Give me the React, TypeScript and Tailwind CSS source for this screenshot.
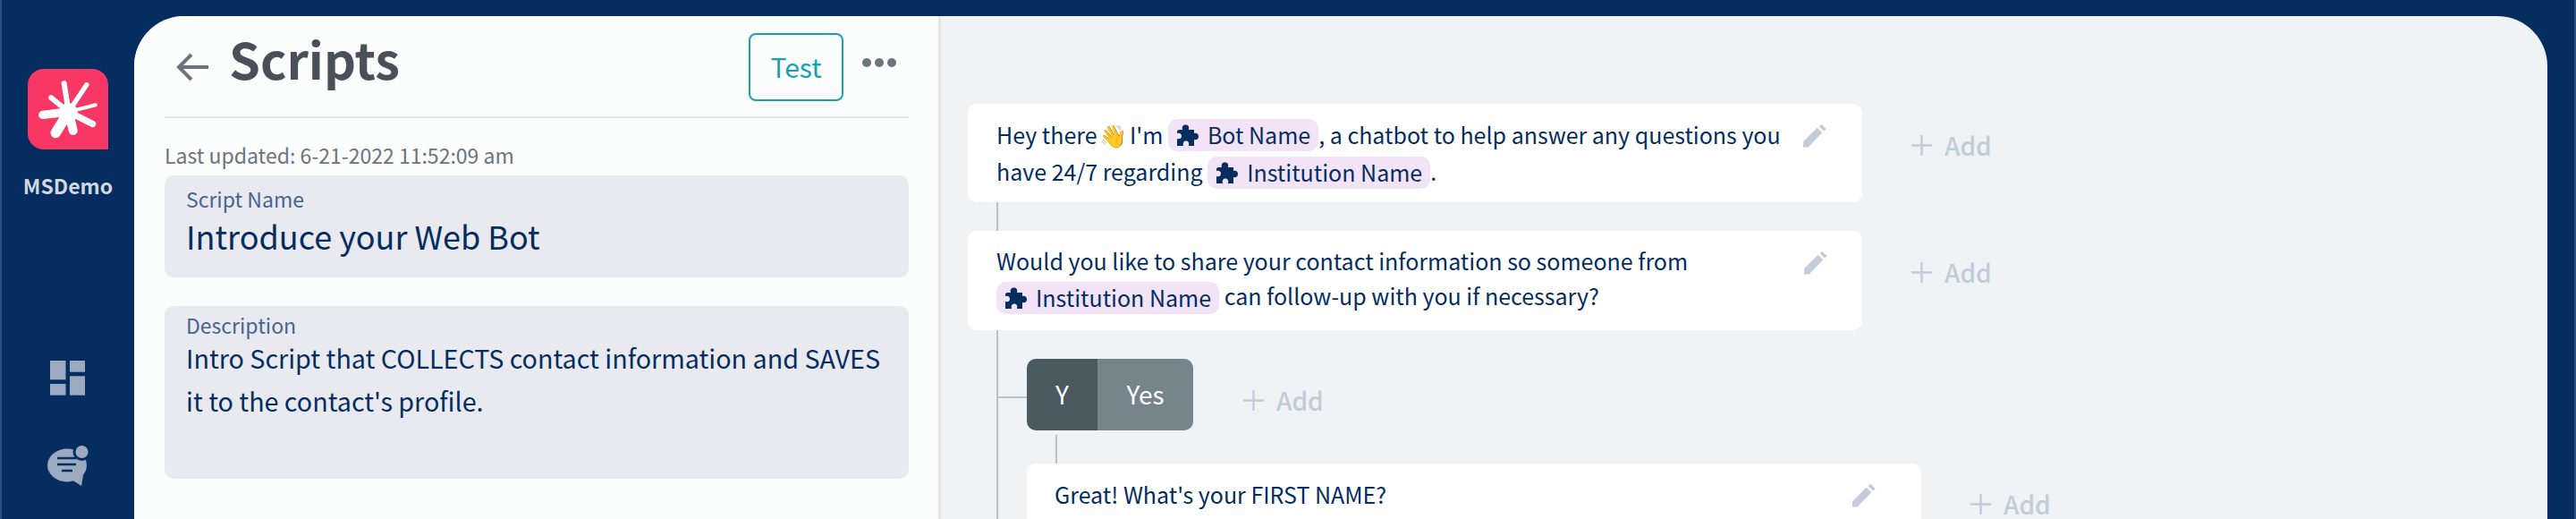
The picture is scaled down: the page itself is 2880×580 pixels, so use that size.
import React from "react";

function Pill({ children, className }: { children: React.ReactNode; className: string }) {
  return (
    <span className={`inline-flex h-[36px] items-center rounded-[10px] bg-[#f2e4f6] px-[9px] align-top leading-[30px] ${className}`}>
      <svg viewBox="0 0 25 24" className="mr-[10px] h-[24px] w-[25px]" fill="#052d60">
        <path d="M3 6 H7 C6 2 8 0.5 10.5 0.5 C13 0.5 15 2 14 6 H20 V10 C23 9 25 11 25 13.5 C25 16 23 18 20 17 V24 H14 C15 20 13 18.5 11 18.5 C9 18.5 7 20 8 24 H1 V16 C4 17 6 15.5 6 13 C6 10.5 4 9 1 10 V8 C1 7 2 6 3 6 Z" />
      </svg>
      <span className="pb-[2px]">{children}</span>
    </span>
  );
}

function Pencil({ className }: { className: string }) {
  return (
    <svg viewBox="0 0 26 26" className={className} fill="#c3ccd8">
      <path d="M0 25.5 L0 19.3 L15.7 3.7 L21.3 9.3 L5.7 25.5 Z" />
      <path d="M17.5 2 L20.5 0 L25.7 5 L23.3 7.7 Z" />
    </svg>
  );
}

function Add({ className }: { className: string }) {
  return (
    <div className={`flex h-[32px] shrink-0 items-center text-[28px] font-medium leading-[32px] text-[#c2ccd9] ${className}`}>
      <svg viewBox="0 0 23 23" className="mr-[14px] h-[23px] w-[23px]" stroke="#c2ccd9" strokeWidth="2.4">
        <path d="M11.5 0 V23 M0 11.5 H23" />
      </svg>
      Add
    </div>
  );
}

function Wave() {
  return <span className="-mx-[3px] font-['Noto_Color_Emoji',sans-serif] text-[25px]">👋</span>;
}

export default function App() {
  return (
    <div className="flex h-[580px] overflow-hidden border-x-2 border-[#2d4f7f] bg-[#052d60] font-['Noto_Sans_CJK_SC',sans-serif] text-[#052d60]">
      <aside className="flex w-[148px] shrink-0 flex-col items-center pt-[77px]">
        <div className="h-[90px] w-[90px] rounded-[18px] rounded-br-none bg-[#f93764]">
          <svg viewBox="0 0 268 268" className="h-full w-full" stroke="#fff" strokeLinecap="round" fill="#fff">
            <circle cx="136" cy="143" r="30" stroke="none" />
            <path d="M136 143 L121 48" strokeWidth="18" />
            <path d="M136 143 L196 53" strokeWidth="16" />
            <path d="M136 143 L226 120" strokeWidth="12" />
            <path d="M136 143 L216 183" strokeWidth="22" />
            <path d="M136 143 L151 205" strokeWidth="30" />
            <path d="M136 143 L93 213" strokeWidth="34" />
            <path d="M136 143 L50 153" strokeWidth="28" />
            <path d="M136 143 L78 96" strokeWidth="18" />
          </svg>
        </div>
        <div className="mt-[25px] text-[23px] font-bold leading-[30px] text-[#d1d8e0]">MSDemo</div>
        <svg viewBox="0 0 40 39" className="ml-[-1px] mt-[181px] h-[39px] w-[40px]" fill="#9caabf">
          <rect x="0" y="0" width="17.5" height="21.3" />
          <rect x="22" y="0" width="17" height="12.7" />
          <rect x="22" y="17.3" width="17" height="21.4" />
          <rect x="0" y="26" width="17.5" height="12.7" />
        </svg>
        <svg viewBox="0 0 46 46" className="mt-[56px] h-[46px] w-[46px]">
          <ellipse cx="22" cy="22" rx="22" ry="18.5" fill="#9caabf" />
          <path d="M27 38 L38 45 L41 27 Z" fill="#9caabf" />
          <circle cx="38.5" cy="7" r="10" fill="#052d60" />
          <circle cx="38.5" cy="7" r="7" fill="#9caabf" />
          <path d="M11 14 H32 M11 21 H32 M16 28 H28" stroke="#052d60" strokeWidth="2.4" />
        </svg>
      </aside>

      <main className="mr-[30px] mt-[18px] flex min-w-0 flex-1 overflow-hidden rounded-t-[56px] bg-[#eff3f6]">
        <section className="w-[902px] shrink-0 border-r-[3px] border-[#e2e5ea] bg-[#fbfcfc] pl-[34px] pr-[33px]">
          <header className="flex h-[114px] border-b-2 border-[#e2e4ea]">
            <svg viewBox="0 0 36 32" className="ml-[13px] mt-[41px] h-[32px] w-[36px]" fill="none" stroke="#6c757d" strokeWidth="4">
              <path d="M17 2 L3 16 L17 30 M3 16 H36" />
            </svg>
            <h1 className="ml-[23px] mt-[9px] text-[56px] font-bold leading-[76px] text-[#495057]">Scripts</h1>
            <button className="ml-auto mt-[19px] h-[76px] w-[106px] rounded-[8px] border-2 border-[#17a2b0] pb-[3px] text-[30px] leading-[36px] text-[#17a2b0]">Test</button>
            <div className="ml-[21px] mr-[14px] mt-[47px] flex h-[10px] gap-[4px]">
              <span className="h-[10px] w-[10px] rounded-full bg-[#6c757d]" />
              <span className="h-[10px] w-[10px] rounded-full bg-[#6c757d]" />
              <span className="h-[10px] w-[10px] rounded-full bg-[#6c757d]" />
            </div>
          </header>
          <p className="mt-[25px] mb-[7px] text-[23px] leading-[32px] text-[#6c757d]">Last updated: 6-21-2022 11:52:09 am</p>
          <div className="h-[114px] rounded-[10px] bg-[#e8eaef] px-[24px] pt-[12px]">
            <div className="text-[23px] leading-[28px] text-[#4a6490]">Script Name</div>
            <div className="mt-[3px] text-[36px] leading-[48px]">Introduce your Web Bot</div>
          </div>
          <div className="mt-[32px] h-[193px] rounded-[10px] bg-[#e8eaef] px-[24px] pt-[8px]">
            <div className="text-[23px] leading-[26px] text-[#4a6490]">Description</div>
            <div className="whitespace-nowrap text-[28.7px] leading-[48px]">
              Intro Script that COLLECTS contact information and SAVES
              <br />
              it to the contact's profile.
            </div>
          </div>
        </section>

        <section className="min-w-0 flex-1 pl-[30px] pt-[98px] text-[25px]">
          <div className="flex items-start">
            <div className="flex h-[110px] w-[1000px] shrink-0 rounded-[10px] bg-white pl-[32px] pt-[15px]">
              <div className="flex-1 whitespace-nowrap leading-[38px]">
                Hey there <Wave /> I'm <Pill className="mt-[2px]">Bot Name</Pill>, a chatbot to help answer any questions you
                <br />
                have 24/7 regarding <Pill className="mt-[3px]">Institution Name</Pill>.
              </div>
              <Pencil className="mr-[40px] mt-[8px] h-[26px] w-[26px] shrink-0" />
            </div>
            <Add className="ml-[55px] mt-[30px]" />
          </div>
          <div className="ml-[32px] h-[32px] w-[2px] bg-[#b5c2cc]" />
          <div className="flex items-start">
            <div className="flex h-[111px] w-[1000px] shrink-0 rounded-[10px] bg-white pl-[32px] pt-[14px]">
              <div className="flex-1 whitespace-nowrap leading-[39px]">
                Would you like to share your contact information so someone from
                <br />
                <Pill className="mt-[4px]">Institution Name</Pill> can follow-up with you if necessary?
              </div>
              <Pencil className="mr-[39px] mt-[9px] h-[26px] w-[26px] shrink-0" />
            </div>
            <Add className="ml-[55px] mt-[30px]" />
          </div>
          <div className="ml-[32px] border-l-2 border-[#b5c2cc] pt-[32px]">
            <div className="flex items-start">
              <div className="mt-[42px] h-[2px] w-[32px] shrink-0 bg-[#b5c2cc]" />
              <div className="flex h-[80px] w-[186px] shrink-0 overflow-hidden rounded-[10px] text-[28px] text-white">
                <div className="flex w-[79px] items-center justify-center bg-[#4a5960] pb-[3px]">Y</div>
                <div className="flex flex-1 items-center justify-center bg-[#76858b] pb-[3px]">Yes</div>
              </div>
              <Add className="ml-[56px] mt-[30px]" />
            </div>
            <div className="ml-[64px] mt-[5px] h-[32px] w-[2px] bg-[#b5c2cc]" />
            <div className="ml-[32px] flex items-start">
              <div className="flex h-[110px] w-[1000px] shrink-0 rounded-[10px] bg-white pl-[31px] pt-[15px]">
                <div className="flex-1 whitespace-nowrap leading-[38px]">Great! What's your FIRST NAME?</div>
                <Pencil className="mr-[51px] mt-[8px] h-[26px] w-[26px] shrink-0" />
              </div>
              <Add className="ml-[55px] mt-[29px]" />
            </div>
          </div>
        </section>
      </main>
    </div>
  );
}
